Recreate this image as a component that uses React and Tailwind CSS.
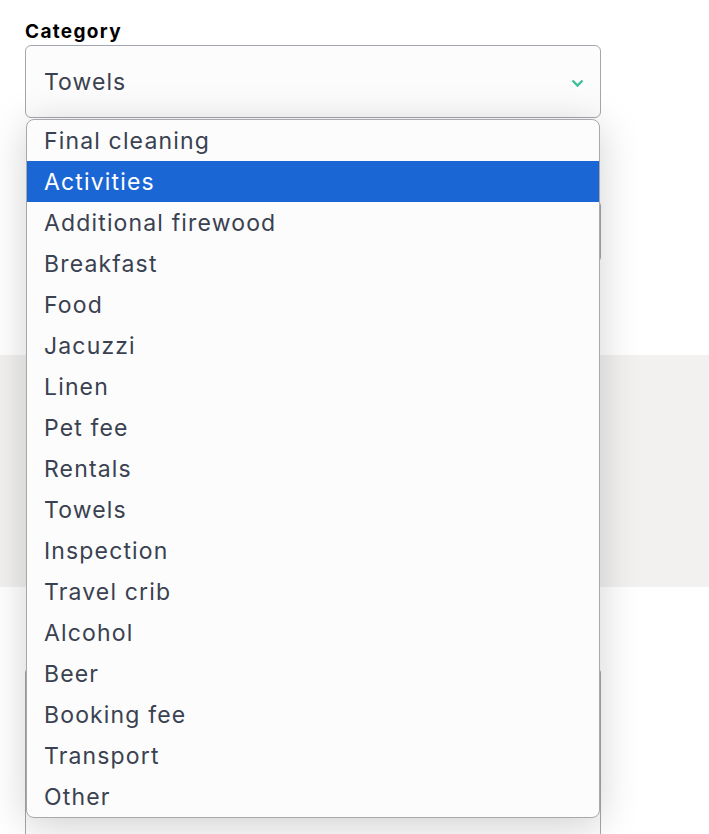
import React from "react";

const items = [
  "Final cleaning",
  "Activities",
  "Additional firewood",
  "Breakfast",
  "Food",
  "Jacuzzi",
  "Linen",
  "Pet fee",
  "Rentals",
  "Towels",
  "Inspection",
  "Travel crib",
  "Alcohol",
  "Beer",
  "Booking fee",
  "Transport",
  "Other",
];

export default function App() {
  return (
    <div
      className="relative min-h-[834px] w-[709px] overflow-hidden bg-white"
      style={{ fontFamily: "Inter, 'Noto Sans', sans-serif" }}
    >
      <div className="pl-[25px] pt-[20px] w-[600px]">
        <div className="text-[19px] font-bold leading-[24px] tracking-[0.07em] text-black">Category</div>
        <div className="relative mt-[1px]">
          <div className="flex h-[73px] w-[576px] items-center justify-between rounded-[6px] border border-[#a3a7b0] bg-[#fcfcfc] pl-[18px] pr-[16px]">
            <span className="pt-[2px] text-[23px] tracking-[0.045em] text-[#3a4150]">Towels</span>
            <svg width="13" height="9" viewBox="0 0 13 9" className="mt-[4px]">
              <path d="M1.5 1.5 L6.5 6.5 L11.5 1.5" fill="none" stroke="#3dbf9a" strokeWidth="2.4" />
            </svg>
          </div>
          {/* content behind the dropdown */}
          <div className="ml-[1px] mt-[82px] h-[63px] w-[575px] rounded-[6px] border border-[#a3a7b0] bg-[#fcfcfc]" />
          <div className="ml-[-25px] mt-[92px] h-[232px] w-[709px] bg-[#f2f1f0]" />
          <div className="mt-[52px] ml-[1px] h-[14px] w-[2px] bg-[#555]" />
          <div className="mt-[14px] h-[200px] w-[576px] rounded-[6px] border border-[#a3a7b0] bg-[#fcfcfc]" />

          {/* dropdown list overlay */}
          <div className="absolute left-[1px] top-[74px] w-[574px] overflow-hidden rounded-[8px] border border-[#a8a8a8] bg-[#fcfcfc] shadow-[0_6px_40px_rgba(0,0,0,0.18)]">
            {items.map((it, i) => (
              <div
                key={it}
                className={
                  i === 1
                    ? "flex h-[41px] items-center bg-[#1a66d4] pl-[17px] pt-[2px] text-[23px] tracking-[0.05em] text-white"
                    : "flex h-[41px] items-center pl-[17px] pt-[2px] text-[23px] tracking-[0.05em] text-[#3a4150]"
                }
              >
                {it}
              </div>
            ))}
          </div>
        </div>
      </div>
    </div>
  );
}
